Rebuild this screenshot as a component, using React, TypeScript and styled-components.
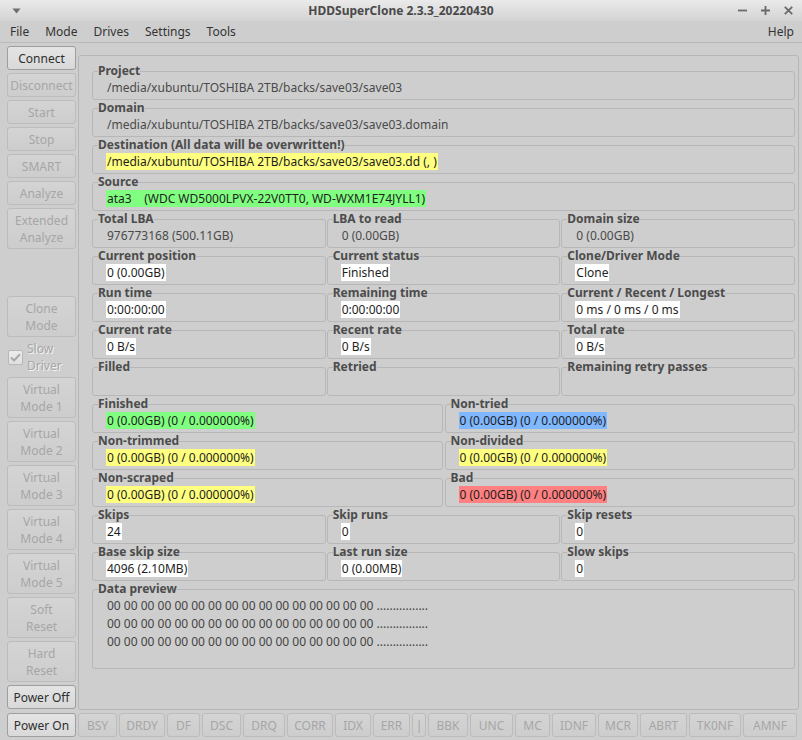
import React from "react";
import styled, { createGlobalStyle, css } from "styled-components";

const GlobalStyle = createGlobalStyle`
  html, body { margin: 0; padding: 0; background: #cecece; }
  body {
    font-family: "Noto Sans", "DejaVu Sans", sans-serif;
    font-size: 12px;
    color: #3c3c3c;
  }
  * { box-sizing: border-box; }
`;

const Window = styled.div`
  width: 802px;
  height: 740px;
  display: flex;
  flex-direction: column;
  background: #cecece;
  overflow: hidden;
`;

const TitleBar = styled.div`
  height: 21px;
  flex: none;
  display: grid;
  grid-template-columns: 80px 1fr 80px;
  align-items: center;
  background: linear-gradient(#eaeaea, #d3d3d3);
`;

const TitleText = styled.div`
  text-align: center;
  font-weight: bold;
  color: #4a4a4a;
  font-size: 12px;
  line-height: 21px;
`;

const TitleLeft = styled.div`
  display: flex;
  align-items: center;
  padding-left: 12px;
`;

const TitleControls = styled.div`
  display: flex;
  justify-content: flex-end;
  align-items: center;
  gap: 14px;
  padding-right: 9px;
`;

const MenuBar = styled.div`
  height: 22px;
  flex: none;
  display: flex;
  align-items: center;
  padding-left: 2px;
  border-bottom: 1px solid #bababa;
`;

const MenuItem = styled.span`
  padding: 0 8px;
  line-height: 21px;
  color: #333;
`;

const MenuSpacer = styled.span`
  flex: 1;
`;

const Main = styled.div`
  flex: 1;
  min-height: 0;
  display: grid;
  grid-template-columns: 69px 1fr;
  column-gap: 2px;
  padding: 0 3px 0 7px;
`;

const SideColumn = styled.div`
  display: flex;
  flex-direction: column;
  gap: 3px;
  padding-top: 3px;
`;

const Button = styled.div<{ $enabled?: boolean; $double?: boolean }>`
  height: ${(p) => (p.$double ? "41px" : "24px")};
  flex: none;
  display: flex;
  align-items: center;
  justify-content: center;
  text-align: center;
  white-space: pre-line;
  line-height: 17px;
  border-radius: 3px;
  font-size: 12px;
  ${(p) =>
    p.$enabled
      ? css`
          background: linear-gradient(#e4e4e4, #d9d9d9);
          border: 1px solid #9e9e9e;
          color: #2e2e2e;
        `
      : css`
          background: linear-gradient(#d4d4d4, #cdcdcd);
          border: 1px solid #bcbcbc;
          color: #a6a6a6;
        `}
`;

const Spacer = styled.div`
  height: 41px;
  flex: none;
`;

const CheckRow = styled.div`
  height: 34px;
  flex: none;
  display: flex;
  align-items: center;
  gap: 4px;
  padding-left: 1px;
`;

const CheckBox = styled.div`
  width: 15px;
  height: 15px;
  border: 1px solid #b8b8b8;
  border-radius: 2px;
  background: linear-gradient(#ececec, #e0e0e0);
  display: flex;
  align-items: center;
  justify-content: center;
`;

const CheckLabel = styled.div`
  color: #a6a6a6;
  line-height: 17px;
  text-shadow: 1px 1px 0 #f4f4f4;
`;

const Panel = styled.div`
  margin-top: 12px;
  border: 1px solid #b6b6b6;
  border-radius: 3px;
  padding: 8px 3px 0 13px;
  display: flex;
  flex-direction: column;
  gap: 1px;
`;

const Row = styled.div<{ $cols: number }>`
  display: grid;
  grid-template-columns: repeat(${(p) => p.$cols}, 1fr);
  column-gap: ${(p) => (p.$cols === 3 ? 1 : 2)}px;
`;

const Group = styled.fieldset`
  margin: 0;
  min-width: 0;
  padding: 1px 2px 3px 5px;
  border: 1px solid #b7b7b7;
  border-radius: 3px;
`;

const Legend = styled.legend`
  padding: 0;
  font-weight: bold;
  line-height: 14px;
  font-size: 12px;
  color: #4c4c4c;
  white-space: nowrap;
`;

const ValueLine = styled.div`
  height: 17px;
  white-space: pre;
`;

const tones: Record<string, string> = {
  plain: "transparent",
  white: "#ffffff",
  yellow: "#ffff80",
  green: "#80ff80",
  blue: "#80b8ff",
  red: "#ff8080",
};

const Value = styled.span<{ $tone: string }>`
  display: inline-block;
  margin-left: 8px;
  padding: 0 1px;
  line-height: 17px;
  height: 17px;
  background: ${(p) => tones[p.$tone]};
  color: ${(p) => (p.$tone === "plain" ? "#4a4a4a" : "#1e1e1e")};
`;

const Preview = styled.div`
  padding: 0 0 14px 9px;
  line-height: 18px;
  white-space: pre;
  color: #444;
`;

const StatusRow = styled.div`
  flex: none;
  height: 30px;
  display: flex;
  gap: 2px;
  padding: 3px 0 3px 7px;
`;

const Indicator = styled(Button)<{ $w: number }>`
  width: ${(p) => p.$w}px;
`;

type Cell = { label: string; value: string; tone: string };

const c = (label: string, value: string, tone = "plain"): Cell => ({ label, value, tone });

const rows: Cell[][] = [
  [c("Project", "/media/xubuntu/TOSHIBA 2TB/backs/save03/save03")],
  [c("Domain", "/media/xubuntu/TOSHIBA 2TB/backs/save03/save03.domain")],
  [c("Destination (All data will be overwritten!)", "/media/xubuntu/TOSHIBA 2TB/backs/save03/save03.dd (, )", "yellow")],
  [c("Source", "ata3    (WDC WD5000LPVX-22V0TT0, WD-WXM1E74JYLL1)", "green")],
  [c("Total LBA", "976773168 (500.11GB)"), c("LBA to read", "0 (0.00GB)"), c("Domain size", "0 (0.00GB)")],
  [c("Current position", "0 (0.00GB)", "white"), c("Current status", "Finished", "white"), c("Clone/Driver Mode", "Clone", "white")],
  [c("Run time", "0:00:00:00", "white"), c("Remaining time", "0:00:00:00", "white"), c("Current / Recent / Longest", "0 ms / 0 ms / 0 ms", "white")],
  [c("Current rate", "0 B/s", "white"), c("Recent rate", "0 B/s", "white"), c("Total rate", "0 B/s", "white")],
  [c("Filled", ""), c("Retried", ""), c("Remaining retry passes", "")],
  [c("Finished", "0 (0.00GB) (0 / 0.000000%)", "green"), c("Non-tried", "0 (0.00GB) (0 / 0.000000%)", "blue")],
  [c("Non-trimmed", "0 (0.00GB) (0 / 0.000000%)", "yellow"), c("Non-divided", "0 (0.00GB) (0 / 0.000000%)", "yellow")],
  [c("Non-scraped", "0 (0.00GB) (0 / 0.000000%)", "yellow"), c("Bad", "0 (0.00GB) (0 / 0.000000%)", "red")],
  [c("Skips", "24", "white"), c("Skip runs", "0", "white"), c("Skip resets", "0", "white")],
  [c("Base skip size", "4096 (2.10MB)", "white"), c("Last run size", "0 (0.00MB)", "white"), c("Slow skips", "0", "white")],
];

const hexLine = Array(16).fill("00").join(" ") + " ................";

const indicators: [string, number][] = [
  ["BSY", 39], ["DRDY", 46], ["DF", 33], ["DSC", 39], ["DRQ", 42], ["CORR", 46],
  ["IDX", 36], ["ERR", 37], ["|", 14], ["BBK", 40], ["UNC", 43], ["MC", 35],
  ["IDNF", 44], ["MCR", 40], ["ABRT", 47], ["TK0NF", 52], ["AMNF", 54],
];

type Side = { text: string; enabled?: boolean; double?: boolean };

const topButtons: Side[] = [
  { text: "Connect", enabled: true },
  { text: "Disconnect" },
  { text: "Start" },
  { text: "Stop" },
  { text: "SMART" },
  { text: "Analyze" },
  { text: "Extended\nAnalyze", double: true },
];

const modeButtons: Side[] = [
  { text: "Virtual\nMode 1", double: true },
  { text: "Virtual\nMode 2", double: true },
  { text: "Virtual\nMode 3", double: true },
  { text: "Virtual\nMode 4", double: true },
  { text: "Virtual\nMode 5", double: true },
  { text: "Soft\nReset", double: true },
  { text: "Hard\nReset", double: true },
  { text: "Power Off", enabled: true },
];

const SideBtn = ({ b }: { b: Side }) => (
  <Button $enabled={b.enabled} $double={b.double}>
    {b.text}
  </Button>
);

export default function App() {
  return (
    <>
      <GlobalStyle />
      <Window>
        <TitleBar>
          <TitleLeft>
            <svg width="9" height="6" viewBox="0 0 9 6">
              <path d="M0.5 0.5 L8.5 0.5 L4.5 5.5 Z" fill="#6e6e6e" />
            </svg>
          </TitleLeft>
          <TitleText>HDDSuperClone 2.3.3_20220430</TitleText>
          <TitleControls>
            <svg width="9" height="9" viewBox="0 0 9 9">
              <path d="M0 4.5 H9" stroke="#6a6a6a" strokeWidth="1.8" />
            </svg>
            <svg width="9" height="9" viewBox="0 0 9 9">
              <path d="M0 4.5 H9 M4.5 0 V9" stroke="#6a6a6a" strokeWidth="1.8" />
            </svg>
            <svg width="9" height="9" viewBox="0 0 9 9">
              <path d="M0.8 0.8 L8.2 8.2 M8.2 0.8 L0.8 8.2" stroke="#6a6a6a" strokeWidth="1.8" />
            </svg>
          </TitleControls>
        </TitleBar>
        <MenuBar>
          <MenuItem>File</MenuItem>
          <MenuItem>Mode</MenuItem>
          <MenuItem>Drives</MenuItem>
          <MenuItem>Settings</MenuItem>
          <MenuItem>Tools</MenuItem>
          <MenuSpacer />
          <MenuItem>Help</MenuItem>
        </MenuBar>
        <Main>
          <SideColumn>
            {topButtons.map((b) => (
              <SideBtn key={b.text} b={b} />
            ))}
            <Spacer />
            <SideBtn b={{ text: "Clone\nMode", double: true }} />
            <CheckRow>
              <CheckBox>
                <svg width="11" height="9" viewBox="0 0 11 9">
                  <path d="M1 4.5 L4 7.5 L10 1.2" stroke="#a9a9a9" strokeWidth="2" fill="none" />
                </svg>
              </CheckBox>
              <CheckLabel>
                Slow
                <br />
                Driver
              </CheckLabel>
            </CheckRow>
            {modeButtons.map((b) => (
              <SideBtn key={b.text} b={b} />
            ))}
          </SideColumn>
          <Panel>
            {rows.map((row, i) => (
              <Row key={i} $cols={row.length}>
                {row.map((cell) => (
                  <Group key={cell.label}>
                    <Legend>{cell.label}</Legend>
                    <ValueLine>
                      {cell.value && <Value $tone={cell.tone}>{cell.value}</Value>}
                    </ValueLine>
                  </Group>
                ))}
              </Row>
            ))}
            <Group>
              <Legend>Data preview</Legend>
              <Preview>
                {hexLine}
                {"\n"}
                {hexLine}
                {"\n"}
                {hexLine}
              </Preview>
            </Group>
          </Panel>
        </Main>
        <StatusRow>
          <Indicator $w={69} $enabled>
            Power On
          </Indicator>
          {indicators.map(([t, w]) => (
            <Indicator key={t} $w={w}>
              {t}
            </Indicator>
          ))}
        </StatusRow>
      </Window>
    </>
  );
}
